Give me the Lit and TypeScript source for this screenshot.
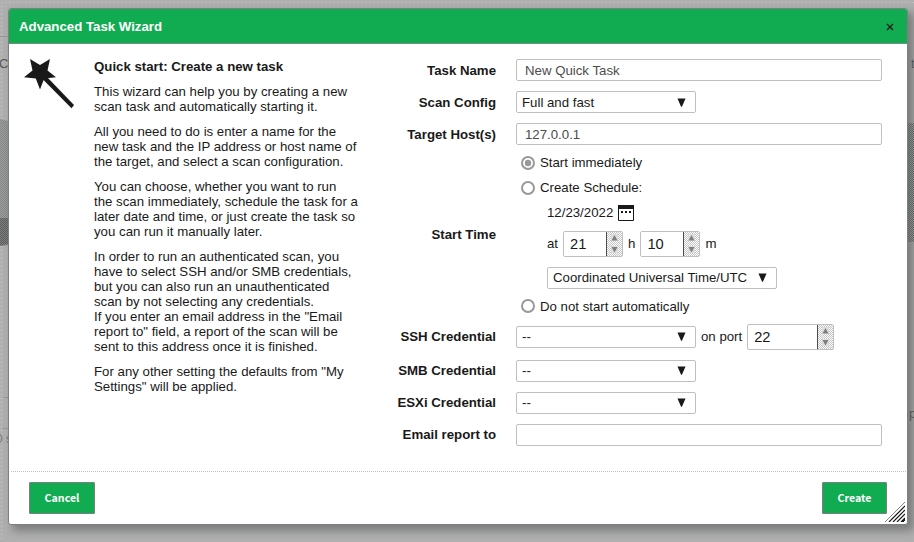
import { LitElement, html, css, svg } from "lit";
import { customElement, property } from "lit/decorators.js";

@customElement("select-box")
class SelectBox extends LitElement {
  static styles = css`
    :host { display: flex; box-sizing: border-box; width: 180px; height: 22px; border: 1px solid #bfbfbf; border-radius: 2px;
      background: #fff; align-items: center; justify-content: space-between; padding: 0 8px 0 5px; white-space: nowrap; }
    :host([wide]) { width: 230px; }
    :host([raised]) { padding-bottom: 1px; }
    .arrow { width: 9px; height: 9px; display: block; margin-right: 1px; }
  `;
  @property() value = "";
  render() {
    return html`<span>${this.value}</span>
      <svg class="arrow" viewBox="0 0 9 9"><path d="M0.5 0.5h8L4.9 8.8h-.8z" fill="#191919" /></svg>`;
  }
}

@customElement("number-spinner")
class NumberSpinner extends LitElement {
  static styles = css`
    :host { display: flex; box-sizing: border-box; width: 60px; height: 26px; border: 1px solid #bfbfbf; border-radius: 2px;
      background: #fff; font-size: 14.67px; }
    :host([wide]) { width: 87px; }
    .value { flex: 1; padding-left: 6px; line-height: 24px; }
    .buttons { width: 15px; border-left: 1px solid #4c4c4c;
      background: repeating-conic-gradient(#c4c4c4 0 25%, #fff 0 50%) 0 0 / 2px 2px; }
    .buttons svg { display: block; width: 15px; height: 24px; }
  `;
  @property() value = "";
  render() {
    return html`<span class="value">${this.value}</span>
      <span class="buttons"><svg viewBox="0 0 15 24" fill="#7f7f7f">
        <rect x="4" y="2" width="7" height="7" fill="#ddd" /><rect x="4" y="14" width="7" height="7" fill="#ddd" />
        <path d="M4.500 8.500L7.500 3l3 5.500zM4.500 15h6l-3 5.500z" /></svg></span>`;
  }
}

@customElement("app-root")
class AppRoot extends LitElement {
  static styles = css`
    :host { display: block; position: relative; width: 914px; height: 542px; overflow: hidden; box-sizing: border-box;
      padding: 8px 6px 17px 8px; background: #b0b0b0; color: #191919;
      font: 13.24px/15px "Liberation Sans", Arial, sans-serif; }
    .backdrop { position: absolute; inset: 0; width: 914px; height: 542px; }
    .dialog { position: relative; box-sizing: border-box; width: 900px; height: 517px; border: 1px solid #7f7f7f;
      border-radius: 3px; background: #fff; display: flex; flex-direction: column;
      box-shadow: 5px 5px 8px 1px rgba(90, 94, 92, 0.62); }
    .header { height: 34px; background: #11ab51; border-bottom: 1px solid #788f80; display: flex; align-items: center;
      justify-content: space-between; padding: 0 13px 0 10px; color: #fff; font-weight: bold; border-radius: 2px 2px 0 0; }
    .close { width: 8px; height: 8px; display: block; margin-top: 2px; }
    .body { flex: 1; display: flex; }
    .wand { width: 50px; height: 50px; display: block; margin: 15px 20px 0 15px; }
    .intro { width: 280px; padding-top: 15px; white-space: nowrap; }
    .intro p { margin: 0 0 10px; }
    .form { width: 508px; padding-top: 15px; display: flex; flex-direction: column; gap: 10px; }
    .row { display: flex; align-items: center; }
    .label { width: 122px; margin-right: 20px; text-align: right; font-weight: bold; }
    .raised .label, .raised .port { padding-bottom: 1px; }
    .field { box-sizing: border-box; width: 366px; height: 22px; border: 1px solid #bfbfbf; border-radius: 2px;
      padding-left: 8px; line-height: 21px; color: #4c4c4c; }
    .times { width: 366px; height: 159px; }
    .line { display: flex; align-items: center; white-space: nowrap; }
    .text { padding-bottom: 1px; }
    .radio { height: 16px; padding-left: 5px; }
    .mark { width: 14px; height: 14px; margin-right: 5px; display: block; }
    .second { margin-top: 9px; }
    .date { height: 16px; margin: 9px 0 0 31px; }
    .date svg { width: 16px; height: 16px; margin-left: 5px; display: block; }
    .clock { height: 26px; margin: 10px 0 0 31px; gap: 5px; }
    .zone { margin: 10px 0 0 31px; }
    .last { margin-top: 9px; }
    .port { margin: 0 5px; }
    .footer { height: 52px; margin: 0 1px 0 2px; border-top: 1px dotted #bfbfbf; display: flex; justify-content: space-between;
      align-items: center; padding: 0 19px 0 18px; }
    .button { box-sizing: border-box; width: 66px; height: 32px; border: 1px solid #7f7f7f; background: #11ab51; color: #fff;
      font: bold 10.67px/30px "Noto Sans CJK SC", sans-serif; padding: 0; text-align: center; border-radius: 1px; }
    .create { width: 65px; }
    .grip { position: absolute; right: 2px; bottom: 2px; width: 20px; height: 20px; }
  `;

  private mark(checked = false) {
    return html`<svg class="mark" viewBox="0 0 14 14"><circle cx="7" cy="7" r="6" fill="#fff" stroke="#999" stroke-width="2" />
      ${checked ? svg`<circle cx="7" cy="7" r="3.200" fill="#999" />` : ""}</svg>`;
  }

  render() {
    return html`
      <svg class="backdrop" viewBox="0 0 914 542">
        <defs>
          <pattern id="dots" width="4" height="4" patternUnits="userSpaceOnUse"><path d="M1 2h1v1h-1z" fill="#c8c8c8" /></pattern>
          <pattern id="grain" width="2" height="2" patternUnits="userSpaceOnUse"><path d="M0 0h1v1h-1zM1 1h1v1h-1z" fill="#858887" /></pattern>
          <pattern id="dark" width="2" height="2" patternUnits="userSpaceOnUse"><path d="M0 0h1v1h-1zM1 1h1v1h-1z" fill="#5c5f5d" /></pattern>
        </defs>
        <rect y="0" width="914" height="4" fill="url(#dots)" />
        <rect width="4" height="542" fill="url(#dots)" />
        <path d="M0 36.500h8M4 397.500h4M3 428.500h5" stroke="#999" />
        <path d="M0 119l8 2v125h-8z" fill="#9b9e9c" /><path d="M0 119l8 2v97h-8z" fill="url(#grain)" />
        <path d="M0 218h8v26l-8 2z" fill="#7d807e" /><path d="M0 218h8v26l-8 2z" fill="url(#dark)" />
        <text x="-1" y="68" font-size="13" fill="#555">C</text>
        <text x="-4" y="443" font-size="12" fill="#777">0 s</text>
      </svg>
      <div class="dialog">
        <div class="header"><span>Advanced Task Wizard</span>
          <svg class="close" viewBox="0 0 8 8"><path d="M1 1l6 6M7 1L1 7" stroke="#191919" stroke-width="1.200" /></svg></div>
        <div class="body">
          <svg class="wand" viewBox="24 59 50 50" fill="#191919">
            <path d="M30 59l10 6L50 59l-2.500 11.500L56 77.200l-11.800 1.300L40 89.500l-4.200-11L24 77.200l8.500-6.700z" />
            <path d="M42.500 79l3.300-3.300L74 105l-2.500 3.200z" />
          </svg>
          <div class="intro">
            <p><b>Quick start: Create a new task</b></p>
            <p>This wizard can help you by creating a new<br />scan task and automatically starting it.</p>
            <p>All you need to do is enter a name for the<br />new task and the IP address or host name of<br />the target, and select a scan configuration.</p>
            <p>You can choose, whether you want to run<br />the scan immediately, schedule the task for a<br />later date and time, or just create the task so<br />you can run it manually later.</p>
            <p>In order to run an authenticated scan, you<br />have to select SSH and/or SMB credentials,<br />but you can also run an unauthenticated<br />scan by not selecting any credentials.<br />If you enter an email address in the "Email<br />report to" field, a report of the scan will be<br />sent to this address once it is finished.</p>
            <p>For any other setting the defaults from "My<br />Settings" will be applied.</p>
          </div>
          <div class="form">
            <div class="row"><div class="label">Task Name</div><div class="field">New Quick Task</div></div>
            <div class="row"><div class="label">Scan Config</div><select-box value="Full and fast"></select-box></div>
            <div class="row"><div class="label">Target Host(s)</div><div class="field">127.0.0.1</div></div>
            <div class="row"><div class="label">Start Time</div>
              <div class="times">
                <div class="line radio">${this.mark(true)}<span class="text">Start immediately</span></div>
                <div class="line radio second">${this.mark()}<span class="text">Create Schedule:</span></div>
                <div class="line date"><span class="text">12/23/2022</span>
                  <svg viewBox="0 0 16 16"><path d="M.5.5h15v15h-15z" fill="#fff" stroke="#191919" />
                    <path d="M0 0h16v4H0zM3 6h2v2H3zM7 6h2v2H7zM11 6h2v2h-2z" fill="#191919" /></svg></div>
                <div class="line clock"><span class="text">at</span><number-spinner value="21"></number-spinner><span class="text">h</span>
                  <number-spinner value="10"></number-spinner><span class="text">m</span></div>
                <select-box class="zone" wide raised value="Coordinated Universal Time/UTC"></select-box>
                <div class="line radio last">${this.mark()}Do not start automatically</div>
              </div></div>
            <div class="row raised"><div class="label">SSH Credential</div><select-box raised value="--"></select-box>
              <span class="port">on port</span><number-spinner wide value="22"></number-spinner></div>
            <div class="row raised"><div class="label">SMB Credential</div><select-box raised value="--"></select-box></div>
            <div class="row raised"><div class="label">ESXi Credential</div><select-box raised value="--"></select-box></div>
            <div class="row raised"><div class="label">Email report to</div><div class="field"></div></div>
          </div>
        </div>
        <div class="footer"><button class="button">Cancel</button><button class="button create">Create</button></div>
        <svg class="grip" viewBox="0 0 20 20" fill="none" stroke="#191919">
          <path d="M0 20L20 0" stroke="#7f7f7f" /><path d="M4 20L20 4M8 20L20 8M12 20L20 12M16 20l4-4" stroke-width="1.200" />
          <path d="M17 20h1l2-2v-1z" fill="#191919" /></svg>
      </div>
      <svg class="backdrop" viewBox="0 0 914 542">
        <path d="M908 123h6v119h-6z" fill="url(#dark)" />
        <path d="M911 126h1v86h-1z" fill="#11ab51" opacity=".2" />
        <text x="911" y="68" font-size="13" fill="#555">t</text><text x="909" y="418" font-size="13" fill="#555">p</text>
      </svg>`;
  }
}
